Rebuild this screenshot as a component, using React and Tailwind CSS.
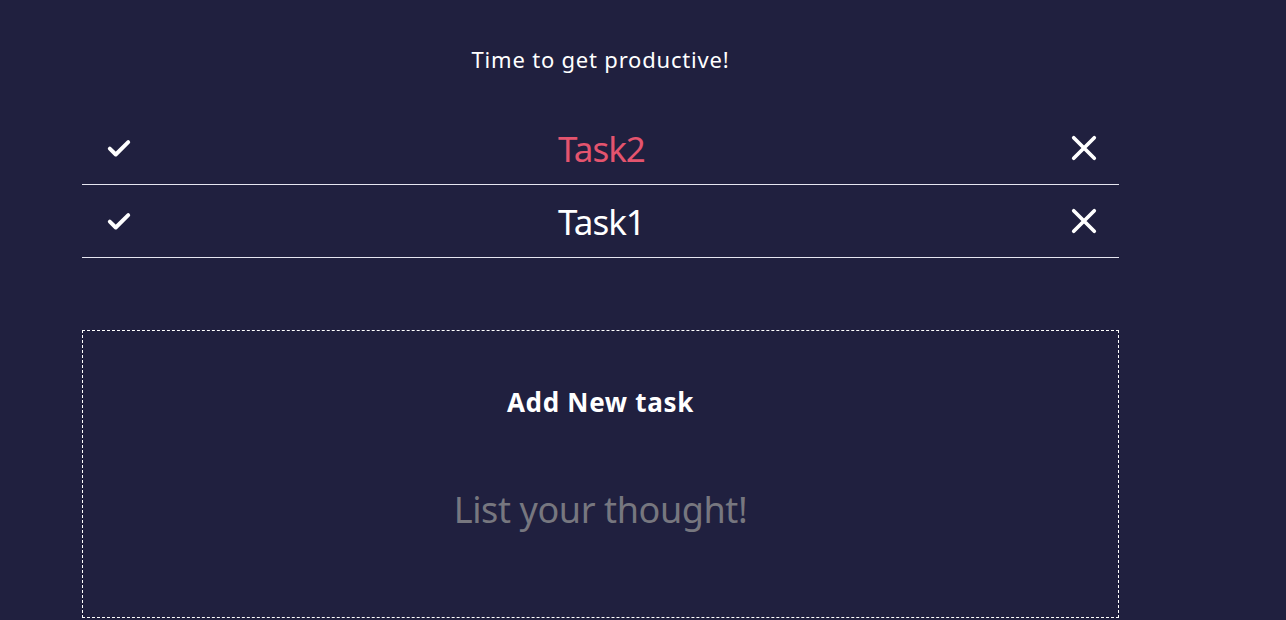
import React, { useState } from 'react';

const font = { fontFamily: '"Noto Sans", "Open Sans", sans-serif' };

function CheckIcon() {
  return (
    <svg width="26" height="26" viewBox="0 0 24 24" fill="none" stroke="white" strokeWidth="3.6" strokeLinecap="round" strokeLinejoin="round">
      <path d="M3.5 12.5l5.5 5.5L20.5 6.5" />
    </svg>
  );
}

function CloseIcon() {
  return (
    <svg width="26" height="26" viewBox="0 0 24 24" fill="none" stroke="white" strokeWidth="3.4" strokeLinecap="round">
      <path d="M2.5 2.5L21.5 21.5M21.5 2.5L2.5 21.5" />
    </svg>
  );
}

function TaskRow({ title, highlight }) {
  return (
    <div className="flex items-center justify-between h-[73px] border-b border-[#e6e6f0] pl-6 pr-[22px]">
      <button className="w-[26px] h-[26px] flex items-center justify-center">
        <CheckIcon />
      </button>
      <span className={`text-[35px] leading-none tracking-[-1px] ${highlight ? 'text-[#e4546e]' : 'text-white'}`}>{title}</span>
      <button className="w-[26px] h-[26px] flex items-center justify-center">
        <CloseIcon />
      </button>
    </div>
  );
}

export default function App() {
  const [text, setText] = useState('');
  const tasks = [
    { id: 2, title: 'Task2', highlight: true },
    { id: 1, title: 'Task1', highlight: false },
  ];

  return (
    <div className="min-h-[620px] bg-[#20203f] text-white overflow-hidden" style={font}>
      <div className="ml-[82px] w-[1037px]">
        <h2 className="text-center text-[22px] tracking-[0.8px] pt-[43px] h-[112px] text-white">Time to get productive!</h2>

        {/* Task list */}
        <div>
          {tasks.map((t) => (
            <TaskRow key={t.id} title={t.title} highlight={t.highlight} />
          ))}
        </div>

        {/* Add form */}
        <div className="mt-[72px] h-[288px] border border-dashed border-white flex flex-col items-center">
          <h3 className="mt-[52px] text-[26px] tracking-[0.7px] font-bold">Add New task</h3>
          <input
            value={text}
            onChange={(e) => setText(e.target.value)}
            placeholder="List your thought!"
            className="mt-[61px] w-[600px] bg-transparent text-center text-[36px] tracking-[-0.4px] outline-none placeholder:text-[#77777f]"
          />
        </div>
      </div>
    </div>
  );
}
